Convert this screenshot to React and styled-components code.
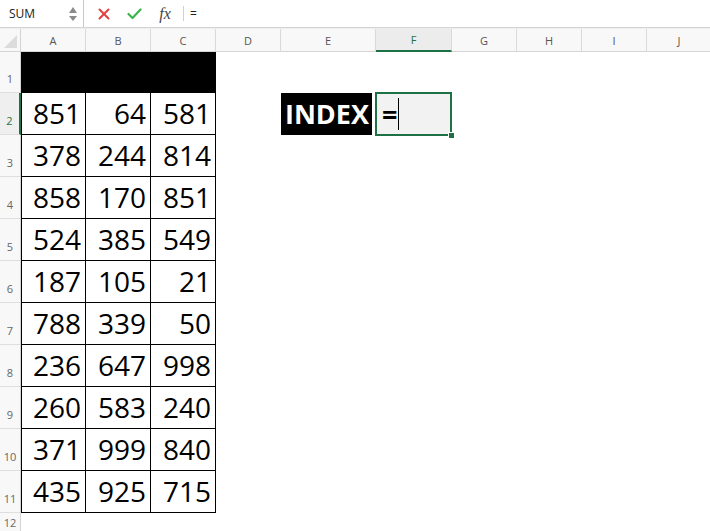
import React from "react";
import styled, { createGlobalStyle, css } from "styled-components";

const GlobalStyle = createGlobalStyle`
  html, body {
    margin: 0;
    padding: 0;
    background: #ffffff;
    overflow: hidden;
  }
  body {
    font-family: "Open Sans", "Liberation Sans", sans-serif;
  }
`;

const COLS = [
  { name: "A", w: 65 },
  { name: "B", w: 65 },
  { name: "C", w: 65 },
  { name: "D", w: 65 },
  { name: "E", w: 95 },
  { name: "F", w: 76 },
  { name: "G", w: 65 },
  { name: "H", w: 65 },
  { name: "I", w: 65 },
  { name: "J", w: 65 },
];

const DATA = [
  [851, 64, 581],
  [378, 244, 814],
  [858, 170, 851],
  [524, 385, 549],
  [187, 105, 21],
  [788, 339, 50],
  [236, 647, 998],
  [260, 583, 240],
  [371, 999, 840],
  [435, 925, 715],
];

const GREEN = "#1e7145";

const Page = styled.div`
  width: 710px;
  height: 531px;
  overflow: hidden;
  background: #fff;
`;

const Toolbar = styled.div`
  display: flex;
  align-items: center;
  height: 27px;
  border-bottom: 1px solid #d4d4d4;
  background: #fff;
`;

const NameBox = styled.div`
  display: flex;
  align-items: center;
  justify-content: space-between;
  width: 84px;
  height: 100%;
  box-sizing: border-box;
  padding: 0 6px 0 9px;
  border-right: 1px solid #c8c8c8;
  font-size: 12px;
  color: #222;
`;

const Spinner = styled.div`
  display: flex;
  flex-direction: column;
  gap: 3px;
`;

const Arrow = styled.span`
  width: 0;
  height: 0;
  border-left: 4px solid transparent;
  border-right: 4px solid transparent;
  ${(p) =>
    p.$up
      ? css`border-bottom: 6px solid #8a8a8a;`
      : css`border-top: 5px solid #8a8a8a;`}
`;

const IconSlot = styled.div`
  display: flex;
  align-items: center;
  justify-content: center;
  width: 30px;
  height: 100%;
`;

const Fx = styled.span`
  font-family: "Liberation Serif", serif;
  font-style: italic;
  font-size: 16px;
  color: #444;
  margin-left: 2px;
`;

const Divider = styled.div`
  width: 1px;
  height: 15px;
  background: #d0d0d0;
  margin: 0 6px 0 4px;
`;

const FormulaText = styled.span`
  font-size: 12px;
  color: #222;
`;

const Gap = styled.div`
  height: 1px;
  background: #ededed;
`;

const Grid = styled.div`
  display: grid;
  grid-template-columns: 21px ${COLS.map((c) => `${c.w}px`).join(" ")};
  grid-template-rows: 23px 41px repeat(10, 42px) 20px;
`;

const Corner = styled.div`
  position: relative;
  background: #f8f8f8;
  border-right: 1px solid #d4d4d4;
  border-bottom: 1px solid #d4d4d4;
  box-sizing: border-box;

  &::after {
    content: "";
    position: absolute;
    right: 3px;
    bottom: 3px;
    width: 0;
    height: 0;
    border-left: 13px solid transparent;
    border-bottom: 13px solid #dcdcdc;
  }
`;

const ColHead = styled.div`
  display: flex;
  align-items: center;
  justify-content: center;
  box-sizing: border-box;
  font-size: 11px;
  color: ${(p) => (p.$active ? GREEN : "#555")};
  background: ${(p) => (p.$active ? "#ececec" : "#f8f8f8")};
  border-right: 1px solid #d9d9d9;
  border-bottom: ${(p) => (p.$active ? `2px solid ${GREEN}` : "1px solid #d4d4d4")};
`;

const RowHead = styled.div`
  display: flex;
  align-items: flex-end;
  justify-content: center;
  box-sizing: border-box;
  padding-bottom: ${(p) => (p.$short ? "2px" : "6px")};
  font-size: 11px;
  color: ${(p) => (p.$active ? GREEN : "#666")};
  background: ${(p) => (p.$active ? "#efefef" : "#f8f8f8")};
  border-right: ${(p) => (p.$active ? `2px solid ${GREEN}` : "1px solid #d4d4d4")};
  border-bottom: 1px solid #dedede;
`;

const Cell = styled.div`
  box-sizing: border-box;
  background: #fff;
`;

const Banner = styled.div`
  grid-column: 2 / span 3;
  background: #000;
`;

const NumCell = styled.div`
  display: flex;
  align-items: flex-end;
  justify-content: flex-end;
  box-sizing: border-box;
  padding: 0 4px 2px 0;
  font-size: 28px;
  line-height: 37px;
  color: #000;
  border-right: 1px solid #000;
  border-bottom: 1px solid #000;
  ${(p) => p.$first && css`border-left: 1px solid #000;`}
`;

const LabelCell = styled.div`
  display: flex;
  align-items: center;
  justify-content: flex-end;
  box-sizing: border-box;
  background: #000;
  border-right: 4px solid #fff;
  padding: 0 3px 1px 0;
  font-size: 27px;
  font-weight: 700;
  color: #fff;
`;

const EditCell = styled.div`
  position: relative;
  display: flex;
  align-items: center;
  box-sizing: border-box;
  margin: -1px 0 -1px -1px;
  background: #f2f2f2;
  border: 2px solid ${GREEN};
  padding: 0 0 0 5px;
  font-size: 27px;
  font-weight: 700;
  color: #000;

  &::after {
    content: "";
    position: absolute;
    right: -4px;
    bottom: -4px;
    width: 5px;
    height: 5px;
    background: ${GREEN};
    border-left: 1px solid #fff;
    border-top: 1px solid #fff;
  }
`;

const Caret = styled.span`
  display: inline-block;
  width: 1px;
  height: 32px;
  background: #000;
  margin-left: 1px;
`;

const CloseIcon = () => (
  <svg width="12" height="12" viewBox="0 0 12 12">
    <path d="M1.5 1.5 L10.5 10.5 M10.5 1.5 L1.5 10.5" stroke="#e0403f" strokeWidth="2" strokeLinecap="round" />
  </svg>
);

const CheckIcon = () => (
  <svg width="15" height="12" viewBox="0 0 15 12">
    <path d="M1.5 6 L5.5 10 L13.5 1.5" stroke="#3cb44a" strokeWidth="2.2" fill="none" strokeLinecap="round" strokeLinejoin="round" />
  </svg>
);

export default function App() {
  const rows = [];
  // row 1: black banner over A1:C1
  rows.push(
    <React.Fragment key="r1">
      <RowHead>1</RowHead>
      <Banner />
      {COLS.slice(3).map((c) => (
        <Cell key={c.name} />
      ))}
    </React.Fragment>
  );

  DATA.forEach((vals, i) => {
    const rowNum = i + 2;
    rows.push(
      <React.Fragment key={rowNum}>
        <RowHead $active={rowNum === 2}>{rowNum}</RowHead>
        {vals.map((v, j) => (
          <NumCell key={j} $first={j === 0}>
            {v}
          </NumCell>
        ))}
        <Cell />
        {rowNum === 2 ? (
          <>
            <LabelCell>INDEX</LabelCell>
            <EditCell>
              =<Caret />
            </EditCell>
          </>
        ) : (
          <>
            <Cell />
            <Cell />
          </>
        )}
        <Cell />
        <Cell />
        <Cell />
        <Cell />
      </React.Fragment>
    );
  });

  rows.push(
    <React.Fragment key="r12">
      <RowHead $short>12</RowHead>
      {COLS.map((c) => (
        <Cell key={c.name} />
      ))}
    </React.Fragment>
  );

  return (
    <Page>
      <GlobalStyle />
      <Toolbar>
        <NameBox>
          SUM
          <Spinner>
            <Arrow $up />
            <Arrow />
          </Spinner>
        </NameBox>
        <IconSlot style={{ marginLeft: 5 }}>
          <CloseIcon />
        </IconSlot>
        <IconSlot>
          <CheckIcon />
        </IconSlot>
        <IconSlot>
          <Fx>fx</Fx>
        </IconSlot>
        <Divider />
        <FormulaText>=</FormulaText>
      </Toolbar>
      <Gap />
      <Grid>
        <Corner />
        {COLS.map((c) => (
          <ColHead key={c.name} $active={c.name === "F"}>
            {c.name}
          </ColHead>
        ))}
        {rows}
      </Grid>
    </Page>
  );
}
